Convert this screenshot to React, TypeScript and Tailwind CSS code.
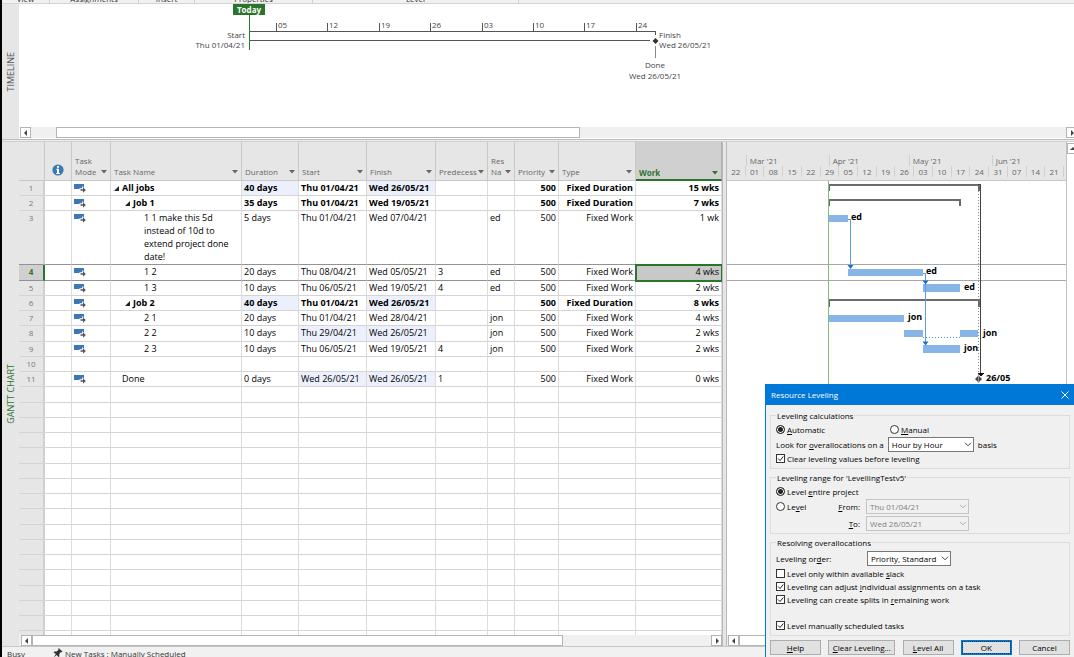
import React from "react";

type Row = {
  id?: number;
  name?: string;
  level?: number;
  summary?: boolean;
  duration?: string;
  start?: string;
  finish?: string;
  pred?: string;
  res?: string;
  type?: string;
  work?: string;
  changed?: string[];
};

const ROWS: Row[] = [
  { id: 1, name: "All jobs", level: 0, summary: true, duration: "40 days", start: "Thu 01/04/21", finish: "Wed 26/05/21", type: "Fixed Duration", work: "15 wks", changed: ["duration", "finish"] },
  { id: 2, name: "Job 1", level: 1, summary: true, duration: "35 days", start: "Thu 01/04/21", finish: "Wed 19/05/21", type: "Fixed Duration", work: "7 wks" },
  { id: 3, name: "1 1 make this 5d instead of 10d to extend project done date!", level: 2, duration: "5 days", start: "Thu 01/04/21", finish: "Wed 07/04/21", res: "ed", type: "Fixed Work", work: "1 wk" },
  { id: 4, name: "1 2", level: 2, duration: "20 days", start: "Thu 08/04/21", finish: "Wed 05/05/21", pred: "3", res: "ed", type: "Fixed Work", work: "4 wks" },
  { id: 5, name: "1 3", level: 2, duration: "10 days", start: "Thu 06/05/21", finish: "Wed 19/05/21", pred: "4", res: "ed", type: "Fixed Work", work: "2 wks" },
  { id: 6, name: "Job 2", level: 1, summary: true, duration: "40 days", start: "Thu 01/04/21", finish: "Wed 26/05/21", type: "Fixed Duration", work: "8 wks", changed: ["duration", "finish"] },
  { id: 7, name: "2 1", level: 2, duration: "20 days", start: "Thu 01/04/21", finish: "Wed 28/04/21", res: "jon", type: "Fixed Work", work: "4 wks" },
  { id: 8, name: "2 2", level: 2, duration: "10 days", start: "Thu 29/04/21", finish: "Wed 26/05/21", res: "jon", type: "Fixed Work", work: "2 wks", changed: ["start", "finish"] },
  { id: 9, name: "2 3", level: 2, duration: "10 days", start: "Thu 06/05/21", finish: "Wed 19/05/21", pred: "4", res: "jon", type: "Fixed Work", work: "2 wks" },
  { id: 10 },
  { id: 11, name: "Done", level: 0, duration: "0 days", start: "Wed 26/05/21", finish: "Wed 26/05/21", pred: "1", type: "Fixed Work", work: "0 wks", changed: ["start", "finish"] },
  ...Array.from({ length: 17 }, () => ({})),
];

const WEEKS = ["22", "01", "08", "15", "22", "29", "05", "12", "19", "26", "03", "10", "17", "24", "31", "07", "14", "21"];
const TICKS = ["05", "12", "19", "26", "03", "10", "17", "24"];

function Arrow({ dir }: { dir: "left" | "right" | "up" }) {
  const d = { left: "M5 1v6L2 4z", right: "M3 1v6l3-3z", up: "M1 5h6L4 2z" }[dir];
  return (
    <svg viewBox="0 0 8 8" className="size-2 shrink-0" aria-hidden="true">
      <path d={d} fill="#444" />
    </svg>
  );
}

function ScrollButton({ dir, label }: { dir: "left" | "right" | "up"; label: string }) {
  return (
    <button type="button" aria-label={label} className="flex h-[11px] w-[11px] shrink-0 items-center justify-center border border-[#b4b4b4] bg-white">
      <Arrow dir={dir} />
    </button>
  );
}

function Ribbon() {
  const group = "flex shrink-0 items-end justify-center border-r border-[#cfcfcf]";
  return (
    <header className="flex h-1 shrink-0 items-end overflow-hidden border-b border-[#d4d4d4] bg-[#f1f1f1] text-[8px] leading-[9px] text-[#333]">
      <div className={group + " w-12"}>View</div>
      <div className={group + " w-[89px]"}>Assignments</div>
      <div className={group + " w-14"}>Insert</div>
      <div className={group + " w-[118px]"}>Properties</div>
      <div className={group + " w-[206px]"}>Level</div>
    </header>
  );
}

function SideLabel({ text, color }: { text: string; color: string }) {
  return (
    <div className="flex w-[17px] shrink-0 items-center justify-center bg-[#e6e6e6]">
      <span className={"rotate-180 text-[9px] leading-3 whitespace-nowrap [writing-mode:vertical-rl] " + color}>{text}</span>
    </div>
  );
}

function Timeline() {
  return (
    <section className="flex h-[135px] shrink-0 bg-white">
      <SideLabel text="TIMELINE" color="text-[#555]" />
      <div className="flex min-w-0 flex-1 flex-col pl-px">
        <svg className="h-[123px] w-full" fontSize="8" fill="#444" shapeRendering="crispEdges">
          <g stroke="#555">
            <path d="M229 27.5H636M229 36.5H630M635.5 27v4" fill="none" />
            <path d="M635.5 42v12" stroke="#888" />
            {TICKS.map((t, i) => (
              <path key={i} d={`M${Math.round(256 + i * 51.4) + 0.5} 19v9`} />
            ))}
          </g>
          {TICKS.map((t, i) => (
            <text key={i} x={Math.round(256 + i * 51.4) + 2} y="24">{t}</text>
          ))}
          <path d="M229.5 11v35" stroke="#2b7a2b" />
          <rect x="213" width="32" height="11" fill="#2b742b" />
          <text x="229" y="9" textAnchor="middle" fill="#fff" fontWeight="700">Today</text>
          <text x="225" y="34" textAnchor="end">Start</text>
          <text x="225" y="44" textAnchor="end">Thu 01/04/21</text>
          <path d="M635.5 34l3 3-3 3-3-3z" fill="#333" shapeRendering="auto" />
          <text x="639" y="34">Finish</text>
          <text x="639" y="44">Wed 26/05/21</text>
          <text x="635" y="64" textAnchor="middle">Done</text>
          <text x="635" y="75" textAnchor="middle">Wed 26/05/21</text>
        </svg>
        <div className="flex h-[11px] bg-[#f0f0f0]">
          <ScrollButton dir="left" label="Scroll timeline left" />
          <div className="ml-[25px] w-[524px] border border-[#b4b4b4] bg-white" />
          <div className="flex-1" />
          <div className="w-2 overflow-hidden">
            <ScrollButton dir="right" label="Scroll timeline right" />
          </div>
        </div>
      </div>
    </section>
  );
}

function FilterButton({ label, active }: { label: string; active?: boolean }) {
  return (
    <button type="button" aria-label={"Filter " + label} className={"mb-[3px] flex shrink-0 " + (active ? "text-[#2b742b]" : "text-[#666]")}>
      <svg viewBox="0 0 6 4" className="h-1 w-1.5" aria-hidden="true">
        <path d="M0 0h6L3 3.6z" fill="currentColor" />
      </svg>
    </button>
  );
}

function Head({ lines, active }: { lines: string[]; active?: boolean }) {
  return (
    <th
      scope="col"
      className={
        "h-[39px] border-r p-0 align-bottom font-normal " +
        (active ? "border-b-2 border-r-[#b0b0b0] border-b-[#2b742b] bg-[#d0d0d0] pb-px" : "border-b border-[#c8c8c8] pb-[3px]")
      }
    >
      <div className="flex items-end justify-between pr-[3px] pl-[3px]">
        <span className={"min-w-0 overflow-hidden text-left leading-[11px] whitespace-nowrap " + (active ? "font-bold text-[#2b742b]" : "")}>
          {lines.map((l) => (
            <span key={l} className="block">{l}</span>
          ))}
        </span>
        <FilterButton label={lines.join(" ")} active={active} />
      </div>
    </th>
  );
}

function ModeIcon() {
  return (
    <svg viewBox="0 0 12 10" className="mt-[3px] h-2.5 w-3" aria-label="Auto scheduled" role="img">
      <path d="M0 0h10v5H0z" fill="#3d78b4" />
      <path d="M5.500 4.200h2.700V2l3.800 4-3.800 4V7.800H5.500z" fill="#fff" />
      <path d="M6.500 5.300h2.500V3.200l2.800 2.800L9 8.800V6.700H6.500z" fill="#555" />
    </svg>
  );
}

const INDENT = ["pl-[9px]", "pl-5", "pl-[31px]"];

function TaskTable() {
  return (
    <table className="w-[703px] table-fixed border-separate border-spacing-0 text-[9px] text-black">
      <colgroup>
        <col className="w-[26px]" />
        <col className="w-[27px]" />
        <col className="w-[39px]" />
        <col className="w-[131px]" />
        <col className="w-[57px]" />
        <col className="w-[68px]" />
        <col className="w-[69px]" />
        <col className="w-[52px]" />
        <col className="w-[27px]" />
        <col className="w-[44px]" />
        <col className="w-[77px]" />
        <col className="w-[86px]" />
      </colgroup>
      <thead className="bg-[#e6e6e6] text-[8px] text-[#666]">
        <tr>
          <th scope="col" aria-label="Row" className="border-r border-b border-[#c8c8c8]" />
          <th scope="col" aria-label="Indicators" className="border-r border-b border-[#c8c8c8] p-0 pb-1 align-bottom">
            <svg viewBox="0 0 12 12" className="mx-auto size-3" aria-hidden="true">
              <circle cx="6" cy="6" r="5.600" fill="#3d78b4" />
              <path d="M5 2h2v1.700H5zM4.300 4.700H7V9h.9v1H4.200V9H5V5.700h-.7z" fill="#fff" />
            </svg>
          </th>
          <Head lines={["Task", "Mode"]} />
          <Head lines={["Task Name"]} />
          <Head lines={["Duration"]} />
          <Head lines={["Start"]} />
          <Head lines={["Finish"]} />
          <Head lines={["Predecess"]} />
          <Head lines={["Res", "Na"]} />
          <Head lines={["Priority"]} />
          <Head lines={["Type"]} />
          <Head lines={["Work"]} active />
        </tr>
      </thead>
      <tbody>
        {ROWS.map((r, i) => {
          const selected = r.id === 4;
          const line = selected || r.id === 3 ? " border-b-[#929292]" : " border-b-[#d4d4d4]";
          const cell = "border-r border-b border-r-[#dcdcdc] px-0.5 py-0 align-top leading-[14px] whitespace-nowrap" + line;
          const tint = (k: string) => (r.changed?.includes(k) ? " bg-[#ecf0fc]" : "");
          return (
            <tr key={i} className={(r.id === 3 ? "h-[54px]" : "h-[15px] nth-[4n]:h-4") + (r.summary ? " font-bold" : "")}>
              <th
                scope="row"
                className={
                  "border-b p-0 align-top text-[8px] leading-[13px] " +
                  (selected
                    ? "border-r-2 border-r-[#2b742b] border-b-[#929292] bg-[#d0d0d0] font-bold text-[#2b742b]"
                    : "border-r-2 border-r-[#cfcfcf] bg-[#e6e6e6] font-normal text-[#777]" + line)
                }
              >
                {r.id}
              </th>
              <td className={cell} />
              <td className={cell}>{r.name && <ModeIcon />}</td>
              <td className={cell}>
                {r.name && (
                  <div className={"relative " + INDENT[r.level ?? 0]}>
                    {r.summary && <Caret />}
                    <div className={r.level === 2 ? "leading-[13px] whitespace-normal" : ""}>{r.name}</div>
                  </div>
                )}
              </td>
              <td className={cell + tint("duration")}>{r.duration}</td>
              <td className={cell + tint("start")}>{r.start}</td>
              <td className={cell + tint("finish")}>{r.finish}</td>
              <td className={cell}>{r.pred}</td>
              <td className={cell}>{r.res}</td>
              <td className={cell + " text-right"}>{r.name && "500"}</td>
              <td className={cell + " text-right"}>{r.type}</td>
              <td className={cell + " text-right" + (selected ? " bg-[#c8c8c8] outline-2 -outline-offset-1 outline-[#2b742b]" : "")}>{r.work}</td>
            </tr>
          );
        })}
      </tbody>
    </table>
  );
}

function Caret() {
  return (
    <svg viewBox="0 0 5 5" className="absolute top-[5px] -ml-2 size-[5px]" aria-hidden="true">
      <path d="M5 0v5H0z" fill="#222" />
    </svg>
  );
}

function GanttHeader() {
  const month = "border-l border-[#d0d0d0] pl-[3px]";
  return (
    <div className="flex h-[39px] flex-col justify-end border-b border-[#c8c8c8] bg-[#e6e6e6] text-[8px] leading-[11px] text-[#666]">
      <div className="grid w-[337px] grid-cols-[7fr_31fr_30fr_31fr_27fr]">
        <span />
        <span className={month}>Mar '21</span>
        <span className={month}>Apr '21</span>
        <span className={month}>May '21</span>
        <span className={month}>Jun '21</span>
      </div>
      <div className="grid w-[337px] grid-cols-18 pb-[3px]">
        {WEEKS.map((w, i) => (
          <span key={i} className="border-r border-[#d0d0d0] text-center">{w}</span>
        ))}
      </div>
    </div>
  );
}

const BARS = [
  [102, 34, 19, 7],
  [121, 88, 75, 7],
  [196, 103, 37, 8],
  [102, 134, 75, 7],
  [177, 149, 19, 7],
  [233, 149, 18, 7],
  [196, 164, 37, 8],
];

function GanttChart() {
  return (
    <svg className="h-0 min-h-0 w-full flex-1 bg-white" shapeRendering="crispEdges" fontSize="9" fontWeight="700">
      <path d="M0 83.500H1400M0 99.500H1400" stroke="#a8a8a8" />
      <path d="M251.500 4V196" stroke="#888" strokeDasharray="1 2" />
      <g fill="none" stroke="#6b6b6b" strokeWidth="2">
        <path d="M102 10V4H252V10" />
        <path d="M102 25V19H233V25" />
        <path d="M102 126V119H252V126" />
      </g>
      <path d="M251 3.500h2.500V193" fill="none" stroke="#444" />
      <path d="M251 192h6l-3 4z" fill="#111" />
      {BARS.map(([x, y, w, h], i) => (
        <rect key={i} x={x} y={y} width={w} height={h} fill="#87b5e8" />
      ))}
      <path d="M196 156.500H233" stroke="#4a90d9" strokeDasharray="1 2" />
      <g fill="none" stroke="#5b9ce4">
        <path d="M121 38.500h2.500V84" />
        <path d="M196 92.500h2.500V161" />
      </g>
      <path d="M120.500 84h6l-3 4zM195.500 99.500h6l-3 4zM195.500 160.500h6l-3 4z" fill="#1f6fc9" shapeRendering="auto" />
      <path d="M101.500 0V1000" stroke="#7cc07c" />
      <path d="M251.500 194.500l3.500 3.500-3.500 3.500-3.500-3.500z" fill="#444" shapeRendering="auto" />
      <path d="M251.500 194v8" stroke="#999" />
      <text x="124" y="39">ed</text>
      <text x="199" y="93">ed</text>
      <text x="237" y="109">ed</text>
      <text x="181" y="139">jon</text>
      <text x="256" y="155">jon</text>
      <text x="237" y="170">jon</text>
      <text x="259" y="200">26/05</text>
    </svg>
  );
}

function U({ children }: { children: React.ReactNode }) {
  return <span className="underline underline-offset-1">{children}</span>;
}

function Check({ children, checked }: { children: React.ReactNode; checked?: boolean }) {
  return (
    <label className="flex h-[13px] items-center gap-0.5">
      <span className="relative flex">
        <input type="checkbox" defaultChecked={checked} className="peer size-[9px] appearance-none border border-[#333] bg-white" />
        <svg viewBox="0 0 9 9" className="absolute inset-0 hidden size-[9px] peer-checked:block" aria-hidden="true">
          <path d="M2 4.500l2 2 3.300-4" fill="none" stroke="#222" />
        </svg>
      </span>
      <span>{children}</span>
    </label>
  );
}

function Radio({ children, name, checked }: { children: React.ReactNode; name: string; checked?: boolean }) {
  return (
    <label className="flex h-[15px] items-center gap-0.5">
      <input
        type="radio"
        name={name}
        defaultChecked={checked}
        className="size-[9px] appearance-none rounded-full border border-[#333] bg-white checked:bg-[#222] checked:shadow-[inset_0_0_0_1px_#fff]"
      />
      <span>{children}</span>
    </label>
  );
}

function Picker({ id, value, disabled, width }: { id: string; value: string; disabled?: boolean; width: string }) {
  return (
    <span className={"relative flex h-[15px] " + width}>
      <select
        id={id}
        disabled={disabled}
        className={
          "w-full appearance-none border pl-[3px] leading-3 opacity-100 " +
          (disabled ? "border-[#c4c4c4] bg-[#f0f0f0] text-[#808080]" : "border-[#777] bg-white text-black")
        }
      >
        <option>{value}</option>
      </select>
      <svg viewBox="0 0 8 5" className="pointer-events-none absolute top-[5px] right-0.5 h-[5px] w-2" aria-hidden="true">
        <path d="M1 .8l3 3 3-3" fill="none" stroke={disabled ? "#aaa" : "#444"} />
      </svg>
    </span>
  );
}

function Group({ title, children, className }: { title: string; children: React.ReactNode; className: string }) {
  return (
    <fieldset className={"min-w-0 border border-[#dcdcdc] pr-1 pl-[5px] " + className}>
      <legend className="h-[11px] px-px leading-[11px]">{title}</legend>
      {children}
    </fieldset>
  );
}

function LevelingDialog() {
  const button = "h-[15px] border border-[#adadad] bg-[#e1e1e1] leading-3 whitespace-nowrap";
  return (
    <div role="dialog" aria-label="Resource Leveling" className="absolute right-0 bottom-0 w-[309px] border-l border-[#0078d7] bg-[#f0f0f0] pb-0.5 text-[8px] leading-[11px] text-black">
      <div className="flex h-[21px] items-center justify-between bg-[#0078d7] px-[5px] text-white">
        <h2>Resource Leveling</h2>
        <button type="button" aria-label="Close">
          <svg viewBox="0 0 8 8" className="size-2" aria-hidden="true">
            <path d="M.5 .5l7 7M7.500 .5l-7 7" stroke="#fff" />
          </svg>
        </button>
      </div>
      <div className="flex flex-col gap-[3px] px-1 pt-[5px]">
        <Group title="Leveling calculations" className="h-[59px] pt-px">
          <div className="grid grid-cols-[114px_1fr]">
            <Radio name="calc" checked><U>A</U>utomatic</Radio>
            <Radio name="calc"><U>M</U>anual</Radio>
          </div>
          <div className="flex items-center gap-1 whitespace-nowrap">
            <label htmlFor="basis">Look for <U>o</U>verallocations on a</label>
            <Picker id="basis" value="Hour by Hour" width="w-[86px]" />
            <span>basis</span>
          </div>
          <Check checked>Clear levelin<U>g</U> values before leveling</Check>
        </Group>
        <Group title="Leveling range for 'LevellingTestv5'" className="h-[62px] pt-px">
          <Radio name="range" checked>Level <U>e</U>ntire project</Radio>
          <div className="grid grid-cols-[56px_22px_1fr] items-center gap-x-[6px] gap-y-0.5">
            <Radio name="range">Le<U>v</U>el</Radio>
            <label htmlFor="from" className="text-right"><U>F</U>rom:</label>
            <Picker id="from" value="Thu 01/04/21" disabled width="w-[103px]" />
            <label htmlFor="to" className="col-start-2 text-right"><U>T</U>o:</label>
            <Picker id="to" value="Wed 26/05/21" disabled width="w-[103px]" />
          </div>
        </Group>
        <Group title="Resolving overallocations" className="h-[99px]">
          <div className="grid grid-cols-[91px_1fr] items-center pt-[3px] pb-px">
            <label htmlFor="order">Leveling or<U>d</U>er:</label>
            <Picker id="order" value="Priority, Standard" width="w-[84px]" />
          </div>
          <Check>Level only within available <U>s</U>lack</Check>
          <Check checked>Leveling can adjust <U>i</U>ndividual assignments on a task</Check>
          <Check checked>Leveling can create splits in <U>r</U>emaining work</Check>
          <div className="pt-[13px]">
            <Check checked>Level manually scheduled tasks</Check>
          </div>
        </Group>
        <div className="flex justify-between pt-px">
          <button type="button" className={button + " w-[51px]"}><U>H</U>elp</button>
          <button type="button" className={button + " w-[67px]"}><U>C</U>lear Leveling...</button>
          <button type="button" className={button + " w-[51px]"}><U>L</U>evel All</button>
          <button type="button" className="h-[15px] w-[51px] border-2 border-[#0078d7] bg-[#e1e1e1] leading-[11px]">
            <span className="block outline-1 outline-dotted outline-[#333]">OK</span>
          </button>
          <button type="button" className={button + " w-[51px]"}>Cancel</button>
        </div>
      </div>
    </div>
  );
}

export default function App() {
  return (
    <div className="relative flex h-screen flex-col overflow-hidden border-l-2 border-black bg-[#f1f1f1] font-['Open_Sans','Noto_Sans',sans-serif]">
      <Ribbon />
      <Timeline />
      <div className="h-[3px] shrink-0 border-t border-b border-t-[#bdbdbd] border-b-[#d0d0d0] bg-[#ececec]" />
      <main className="flex min-h-0 flex-1 bg-white">
        <SideLabel text="GANTT CHART" color="text-[#2b742b]" />
        <div className="flex w-[703px] shrink-0 flex-col">
          <div className="min-h-0 flex-1 overflow-hidden">
            <TaskTable />
          </div>
          <div className="flex h-[11px] shrink-0 bg-[#f0f0f0] pl-0.5">
            <ScrollButton dir="left" label="Scroll table left" />
            <div className="w-[531px] border border-[#b4b4b4] bg-white" />
            <div className="flex-1" />
            <ScrollButton dir="right" label="Scroll table right" />
          </div>
        </div>
        <div className="w-[5px] shrink-0 border-r border-l border-[#b8b8b8] bg-[#e6e6e6]" />
        <div className="flex min-w-0 flex-1 flex-col">
          <GanttHeader />
          <GanttChart />
          <div className="flex h-[11px] shrink-0 bg-[#f0f0f0] pl-px">
            <ScrollButton dir="left" label="Scroll chart left" />
            <div className="w-40 border border-[#b4b4b4] bg-white" />
          </div>
        </div>
        <div className="w-2 shrink-0 overflow-hidden border-l border-[#c0c0c0] bg-white pt-px">
          <ScrollButton dir="up" label="Scroll chart up" />
        </div>
      </main>
      <footer className="flex h-[11px] shrink-0 gap-[26px] overflow-hidden border-t border-[#c8c8c8] bg-[#f1f1f1] pt-px pl-[5px] text-[8px] leading-[11px] text-[#333]">
        <span className="w-5">Busy</span>
        <span className="flex gap-0.5">
          <svg viewBox="0 0 10 10" className="size-2.5" aria-hidden="true">
            <path d="M5.500 0l4 3.500-1 .7-1 0-1.300 2 .2 2.200-1 .6L3.600 7 .8 9.500 2.800 6 .5 4.300l.8-.8 2.300 0L5.300 2z" fill="#333" />
          </svg>
          New Tasks : Manually Scheduled
        </span>
      </footer>
      <LevelingDialog />
    </div>
  );
}
